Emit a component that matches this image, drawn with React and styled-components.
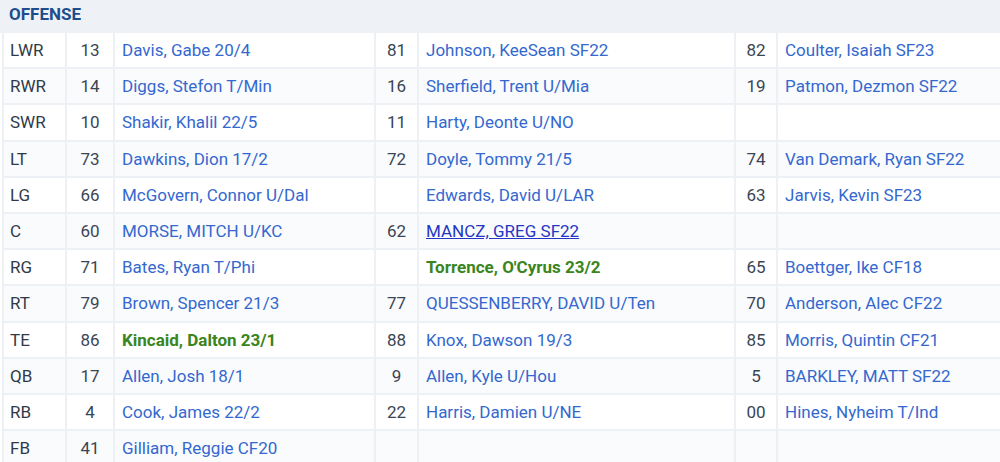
import React from 'react';
import styled, { createGlobalStyle } from 'styled-components';

const GlobalStyle = createGlobalStyle`
    body {
        margin: 0;
        background: #ffffff;
        font-family: Roboto, "Liberation Sans", Arial, sans-serif;
    }
`;

const widths = [63, 48, 261, 43, 317, 42, null];

const rows = [
    ['LWR', [['13', 'Davis, Gabe 20/4'], ['81', 'Johnson, KeeSean SF22'], ['82', 'Coulter, Isaiah SF23']]],
    ['RWR', [['14', 'Diggs, Stefon T/Min'], ['16', 'Sherfield, Trent U/Mia'], ['19', 'Patmon, Dezmon SF22']]],
    ['SWR', [['10', 'Shakir, Khalil 22/5'], ['11', 'Harty, Deonte U/NO'], ['', '']]],
    ['LT', [['73', 'Dawkins, Dion 17/2'], ['72', 'Doyle, Tommy 21/5'], ['74', 'Van Demark, Ryan SF22']]],
    ['LG', [['66', 'McGovern, Connor U/Dal'], ['', 'Edwards, David U/LAR'], ['63', 'Jarvis, Kevin SF23']]],
    ['C', [['60', 'MORSE, MITCH U/KC'], ['62', 'MANCZ, GREG SF22', 'visited'], ['', '']]],
    ['RG', [['71', 'Bates, Ryan T/Phi'], ['', "Torrence, O'Cyrus 23/2", 'rookie'], ['65', 'Boettger, Ike CF18']]],
    ['RT', [['79', 'Brown, Spencer 21/3'], ['77', 'QUESSENBERRY, DAVID U/Ten'], ['70', 'Anderson, Alec CF22']]],
    ['TE', [['86', 'Kincaid, Dalton 23/1', 'rookie'], ['88', 'Knox, Dawson 19/3'], ['85', 'Morris, Quintin CF21']]],
    ['QB', [['17', 'Allen, Josh 18/1'], ['9', 'Allen, Kyle U/Hou'], ['5', 'BARKLEY, MATT SF22']]],
    ['RB', [['4', 'Cook, James 22/2'], ['22', 'Harris, Damien U/NE'], ['00', 'Hines, Nyheim T/Ind']]],
    ['FB', [['41', 'Gilliam, Reggie CF20'], ['', ''], ['', '']]],
];

const App = () => {
    return (
        <Page>
            <GlobalStyle />
            <Header>OFFENSE</Header>
            <Table>
                <colgroup>
                    {widths.map((w, i) => (
                        <Col key={i} $w={w} />
                    ))}
                </colgroup>
                <tbody>
                    {rows.map(([pos, players], i) => (
                        <Row key={pos} $alt={i % 2 === 1}>
                            <Pos>{pos}</Pos>
                            {players.map(([num, name, kind], j) => (
                                <React.Fragment key={j}>
                                    <Num>{num}</Num>
                                    <Name>
                                        {name && <Player href="#" $kind={kind}>{name}</Player>}
                                    </Name>
                                </React.Fragment>
                            ))}
                        </Row>
                    ))}
                </tbody>
            </Table>
        </Page>
    );
};

const Page = styled.div`
    width: 1000px;
    height: 462px;
    overflow: hidden;
`;

const Header = styled.div`
    height: 33px;
    background: #eef2f7;
    color: #1d4d8c;
    font-weight: 700;
    font-size: 17px;
    line-height: 29px;
    padding-left: 9px;
`;

const Table = styled.table`
    margin-left: 2px;
    width: 998px;
    table-layout: fixed;
    border-collapse: collapse;
    font-size: 17px;
    line-height: 22.2px;
`;

const Col = styled.col`
    width: ${(p) => (p.$w ? `${p.$w}px` : 'auto')};
`;

const Row = styled.tr`
    background: ${(p) => (p.$alt ? '#fafbfd' : '#ffffff')};
    border-bottom: 2px solid #edf0f5;
`;

const Cell = styled.td`
    padding: 6px 7px;
    border-left: 2px solid #edf0f5;
    white-space: nowrap;
    overflow: hidden;
`;

const Pos = styled(Cell)`
    color: #2f3a48;
    padding-left: 6px;
`;

const Num = styled(Cell)`
    color: #3a4553;
    text-align: center;
    padding: 6px 2px;
`;

const Name = styled(Cell)``;

const Player = styled.a`
    text-decoration: ${(p) => (p.$kind === 'visited' ? 'underline' : 'none')};
    font-weight: ${(p) => (p.$kind === 'rookie' ? 700 : 400)};
    color: ${(p) =>
        p.$kind === 'rookie' ? '#3a8520' : p.$kind === 'visited' ? '#2536c4' : '#3468cf'};
`;

export default App;
